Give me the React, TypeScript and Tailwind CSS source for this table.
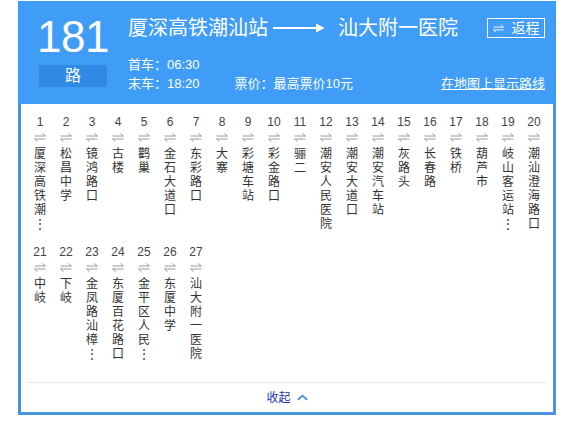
const STOPS = [
  '厦深高铁潮汕站', '松昌中学', '镜鸿路口', '古楼', '鹳巢', '金石大道口', '东彩路口',
  '大寨', '彩塘车站', '彩金路口', '骊二', '潮安人民医院', '潮安大道口', '潮安汽车站',
  '灰路头', '长春路', '铁桥', '葫芦市', '岐山客运站东站', '潮汕澄海路口', '中岐', '下岐',
  '金凤路汕樟路口', '东厦百花路口', '金平区人民医院', '东厦中学', '汕大附一医院',
]

function Harpoons({ className }: { className?: string }) {
  return (
    <svg viewBox="0 0 12 9" className={className} fill="none" stroke="currentColor" strokeWidth="1">
      <path d="M0.5 3h11M11.5 3L8.5 0.5" />
      <path d="M0.5 6h11M0.5 6l3 2.5" />
    </svg>
  )
}

function StopColumn({ index, name }: { index: number; name: string }) {
  const chars = name.length > 6 ? [...name.slice(0, 5), '⋮'] : [...name]
  return (
    <div className="w-[26px] h-[130px] flex flex-col items-center">
      <div className="h-4 text-[12px] leading-4 text-[#444]">{index}</div>
      <Harpoons className="w-3 h-[9px] mt-[3px] text-[#9a9a9a]" />
      <div className="mt-[5px] flex flex-col items-center text-[12px] leading-[14px] text-[#333]">
        {chars.map((c, i) => (
          <span key={i}>{c}</span>
        ))}
      </div>
    </div>
  )
}

export default function App() {
  return (
    <div className="pt-px pl-[18px] font-['Liberation_Sans','Noto_Sans_CJK_SC',sans-serif]">
      <div className="w-[538px]">
        <header className="h-[103px] bg-[#3f9cf7] text-white flex pl-[21px] pr-[11px] pt-[14px]">
          <div className="w-[68px] flex flex-col items-center">
            <div className="text-[44px] leading-[44px] tracking-[-0.5px]">181</div>
            <div className="mt-[6px] w-[68px] h-[22px] bg-[#2f8ae6] flex items-center justify-center text-[16px]">
              路
            </div>
          </div>
          <div className="ml-[21px] flex-1 flex flex-col">
            <div className="flex items-center h-[26px]">
              <span className="text-[20px] leading-[26px]">厦深高铁潮汕站</span>
              <svg viewBox="0 0 52 10" className="w-[52px] h-[10px] mx-[5px]" fill="white">
                <rect x="0" y="4" width="46" height="2" />
                <path d="M43 0.5L51.5 5L43 9.5Z" />
              </svg>
              <span className="ml-[8px] text-[20px] leading-[26px]">汕大附一医院</span>
              <button className="ml-auto h-[20px] w-[58px] border border-white flex items-center justify-center gap-[8px] text-[14px] leading-none">
                <Harpoons className="w-[11px] h-[9px]" />
                <span>返程</span>
              </button>
            </div>
            <div className="mt-[14px] text-[13px] leading-[19px]">首车：06:30</div>
            <div className="flex text-[13px] leading-[19px]">
              <span>末车：18:20</span>
              <span className="ml-[35px]">票价：最高票价10元</span>
              <a className="ml-auto underline">在地图上显示路线</a>
            </div>
          </div>
        </header>
        <section className="border-x-[3px] border-b-[3px] border-[#4a93df] bg-white">
          <div className="flex flex-wrap pl-[6px] pr-[5px] pt-[10px]">
            {STOPS.map((s, i) => (
              <StopColumn key={i} index={i + 1} name={s} />
            ))}
          </div>
          <div className="mx-[6px] mt-2 h-px bg-[#e8e8e8]" />
          <div className="h-[29px] flex items-center justify-center gap-[6px]">
            <span className="text-[12px] text-[#2233b0]">收起</span>
            <svg viewBox="0 0 12 7" className="w-[11px] h-[7px]" fill="none" stroke="#4a90e2" strokeWidth="2">
              <path d="M1 6l5-4.5L11 6" />
            </svg>
          </div>
        </section>
      </div>
    </div>
  )
}
